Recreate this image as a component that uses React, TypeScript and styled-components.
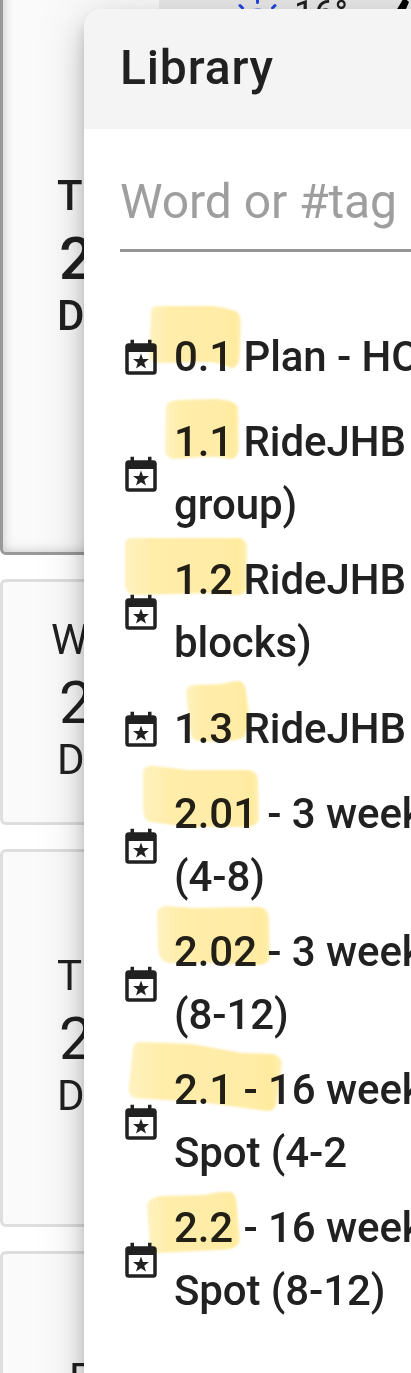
import React from "react";
import styled, { createGlobalStyle } from "styled-components";

const GlobalStyle = createGlobalStyle`
  * { box-sizing: border-box; }
  body {
    margin: 0;
    background: #fff;
    font-family: Roboto, "Liberation Sans", sans-serif;
    color: #212121;
    overflow: hidden;
  }
`;

const Screen = styled.main`
  position: relative;
  width: 411px;
  height: 1373px;
  overflow: hidden;
`;

const Days = styled.div`
  display: flex;
  flex-direction: column;
  gap: 24px;
  margin-top: -39px;
`;

const DayCard = styled.section<{ $height: number; $today?: boolean }>`
  display: flex;
  flex: none;
  width: 480px;
  height: ${(p) => p.$height}px;
  border: 3px solid ${(p) => (p.$today ? "#999" : "#dedede")};
  border-radius: 6px;
  background: #fafafa;
  box-shadow: ${(p) => (p.$today ? "inset 0 0 12px rgba(0,0,0,.22)" : "none")};
  font-weight: ${(p) => (p.$today ? 500 : 400)};
`;

const DayDate = styled.div`
  display: flex;
  flex-direction: column;
  justify-content: center;
  width: 156px;
  padding-bottom: 10px;
`;

const DayLine = styled.span<{ $size: number; $line: number; $indent: number }>`
  font-size: ${(p) => p.$size}px;
  line-height: ${(p) => p.$line}px;
  padding-left: ${(p) => p.$indent}px;
`;

const Weather = styled.div`
  display: flex;
  align-items: flex-start;
  flex: 1;
  height: 90px;
  padding: 31px 0 0 70px;
  background: #eaeaea;
  font-size: 36px;
  line-height: 38px;
  font-weight: 400;
`;

const Temperature = styled.span`
  width: 56px;
  margin-left: 11px;
`;

const Wind = styled.svg`
  margin-left: 43px;
`;

const Panel = styled.aside`
  position: absolute;
  left: 84px;
  top: 9px;
  width: 480px;
  height: 1500px;
  border-radius: 18px;
  background: #fff;
  box-shadow: 0 9px 15px -3px rgba(0, 0, 0, 0.2),
    0 18px 30px 0 rgba(0, 0, 0, 0.14), 0 3px 54px 0 rgba(0, 0, 0, 0.12);
`;

const PanelHeader = styled.header`
  height: 120px;
  padding: 0 36px;
  border-radius: 18px 18px 0 0;
  background: #f4f4f4;
`;

const Title = styled.h1`
  margin: 0;
  font-size: 48px;
  font-weight: 500;
  line-height: 118px;
  letter-spacing: 0.85px;
`;

const SearchField = styled.div`
  height: 123px;
  margin-left: 36px;
  border-bottom: 3px solid #949494;
  color: #9e9e9e;
  font-size: 48px;
  line-height: 146px;
  letter-spacing: -0.08px;
`;

const List = styled.ul`
  list-style: none;
  margin: 56px 0 0;
  padding: 0 0 0 36px;
`;

const Item = styled.li`
  display: flex;
  align-items: center;
  gap: 12px;
  min-height: 96px;
  padding: 6px 0;
`;

const ItemIcon = styled.svg`
  flex: none;
  margin-top: 6px;
`;

const ItemText = styled.div`
  font-size: 42px;
  font-weight: 500;
  line-height: 63px;
  letter-spacing: -0.09px;
  white-space: nowrap;
`;

const ItemLine = styled.div``;

const Highlights = styled.svg`
  position: absolute;
  left: 0;
  top: 0;
  mix-blend-mode: multiply;
  pointer-events: none;
`;

const days = [
  { height: 594, today: true, name: "T", nameIndent: 54 },
  { height: 246, name: "W", nameIndent: 48 },
  { height: 378, name: "T", nameIndent: 54 },
  { height: 380, name: "F", nameIndent: 66 },
];

const items = [
  ["0.1 Plan - HO"],
  ["1.1 RideJHB", "group)"],
  ["1.2 RideJHB", "blocks)"],
  ["1.3 RideJHB"],
  ["2.01 - 3 week", "(4-8)"],
  ["2.02 - 3 week", "(8-12)"],
  ["2.1 - 16 week", "Spot (4-2"],
  ["2.2 - 16 week", "Spot (8-12)"],
];

const strokes = [
  "M151 310Q152 306 159 306H212Q224 307 235 311Q241 314 241 322L240 354Q239 368 231 368Q222 363 210 362L157 363Q149 362 149 355Z",
  "M166 406Q168 400 180 400L215 399Q234 400 238 407L239 448Q238 459 230 459Q220 456 200 457L174 459Q165 458 165 449Z",
  "M125 543Q126 538 133 538H239Q246 539 247 546L247 588Q245 596 236 595L215 593L134 595Q125 594 125 584Z",
  "M186 692Q187 684 196 685L222 684Q232 681 239 681Q245 682 246 692L249 712Q248 732 243 738Q228 743 200 741Q191 742 190 730Z",
  "M143 771Q144 765 155 766L188 770L248 770Q257 771 258 779L259 820Q256 827 246 827L190 827L150 822Q143 820 143 808Z",
  "M157 913Q158 906 167 906L192 908L259 907Q268 908 269 917L270 957Q269 965 257 965L210 963L168 963Q158 960 158 947Z",
  "M133 1048Q134 1041 143 1042L192 1044L242 1053L273 1054Q282 1056 282 1064L277 1102Q276 1111 267 1111L200 1102L134 1098Q128 1095 129 1086Z",
  "M147 1206Q148 1198 160 1196L205 1195Q222 1191 231 1192Q237 1195 237 1207L240 1240Q239 1250 218 1250L157 1253Q152 1251 150 1244Z",
];

function CalendarStar() {
  return (
    <ItemIcon width="42" height="42" viewBox="0 0 24 24" fill="#212121">
      <path
        fillRule="evenodd"
        d="M19 19H5V8h14v11ZM19 3h-1V1h-2v2H8V1H6v2H5a2 2 0 0 0-2 2v14a2 2 0 0 0 2 2h14a2 2 0 0 0 2-2V5a2 2 0 0 0-2-2Z"
      />
      <path d="M12 8.900L13.120 11.950L16.560 12.070L13.850 14.150L14.850 17.400L12 15.500L9.150 17.400L10.150 14.150L7.440 12.070L10.880 11.950Z" />
    </ItemIcon>
  );
}

function WeatherStrip() {
  return (
    <Weather>
      <svg width="54" height="54" viewBox="0 0 54 54" fill="none" stroke="#2346e0" strokeWidth="3" strokeLinecap="round">
        <circle cx="28.5" cy="28" r="13" />
        <path d="M28.5 3v4.500M28.5 48.500v4.500M3 28h5M49 28h5M11 10.500l2.500 2.500M46 10.500l-2.500 2.500M11 45.500l2.500-2.500M46 45.500l-2.500-2.500" />
      </svg>
      <Temperature>16°</Temperature>
      <Wind width="18" height="30" viewBox="0 0 18 30">
        <path d="M11 2.500L16 7 7 28 0 21Z" fill="#000" />
      </Wind>
    </Weather>
  );
}

export default function App() {
  return (
    <>
      <GlobalStyle />
      <Screen>
        <Days>
          {days.map((day, i) => (
            <DayCard key={i} $height={day.height} $today={day.today}>
              <DayDate>
                <DayLine $size={42} $line={60} $indent={day.nameIndent}>{day.name}</DayLine>
                <DayLine $size={60} $line={66} $indent={56}>2</DayLine>
                <DayLine $size={42} $line={48} $indent={54}>D</DayLine>
              </DayDate>
              {day.today && <WeatherStrip />}
            </DayCard>
          ))}
        </Days>
        <Panel>
          <PanelHeader>
            <Title>Library</Title>
          </PanelHeader>
          <SearchField>Word or #tag</SearchField>
          <List>
            {items.map((lines) => (
              <Item key={lines[0]}>
                <CalendarStar />
                <ItemText>
                  {lines.map((line) => (
                    <ItemLine key={line}>{line}</ItemLine>
                  ))}
                </ItemText>
              </Item>
            ))}
          </List>
        </Panel>
        <Highlights width="411" height="1373" viewBox="0 0 411 1373">
          <defs>
            <filter id="soft" x="-5%" y="-5%" width="110%" height="110%" colorInterpolationFilters="sRGB">
              <feGaussianBlur stdDeviation="1" />
            </filter>
            <linearGradient id="marker">
              <stop offset="0" stopColor="#fff2c0" />
              <stop offset="0.22" stopColor="#ffedaa" />
              <stop offset="0.8" stopColor="#ffeca6" />
              <stop offset="0.93" stopColor="#ffeb9e" />
              <stop offset="1" stopColor="#fff0b4" />
            </linearGradient>
          </defs>
          {strokes.map((d) => (
            <path key={d} d={d} fill="url(#marker)" filter="url(#soft)" />
          ))}
        </Highlights>
      </Screen>
    </>
  );
}
